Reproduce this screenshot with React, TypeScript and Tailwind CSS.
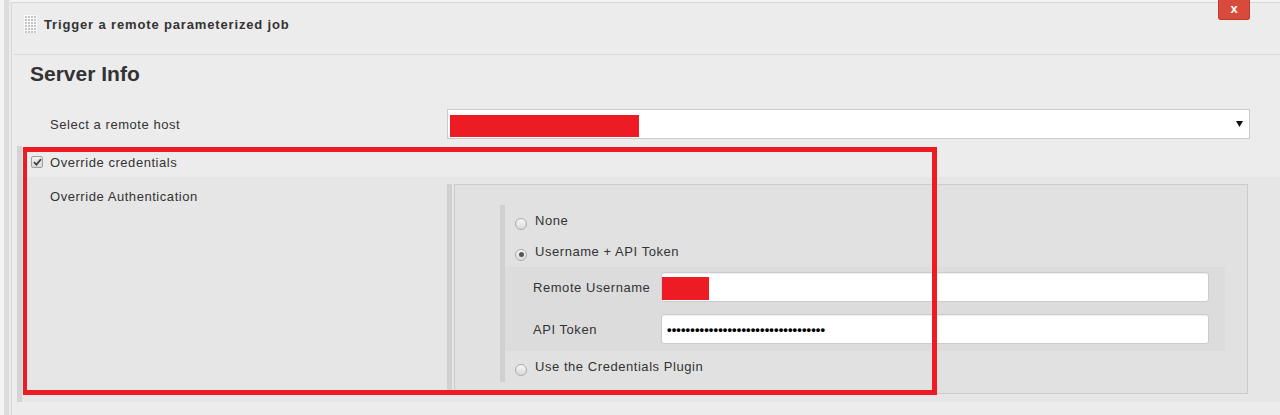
import React from "react";

const font = { fontFamily: '"Liberation Sans", Arial, sans-serif' };

function Grip() {
  const dots: React.ReactNode[] = [];
  for (let r = 0; r < 6; r++) {
    for (let c = 0; c < 4; c++) {
      dots.push(<rect key={`${r}-${c}`} x={1 + c * 3} y={1 + r * 3} width={2} height={2} fill="#c4c4c4" />);
    }
  }
  return (
    <svg width="13" height="18" viewBox="0 0 13 18" className="shrink-0">
      <rect x="0" y="0" width="13" height="18" fill="#fafafa" />
      {dots}
    </svg>
  );
}

function Radio({ checked }: { checked?: boolean }) {
  return (
    <span className="mt-[6px] flex h-[12px] w-[12px] shrink-0 items-center justify-center rounded-full border border-[#ababab] bg-gradient-to-b from-[#f6f6f6] to-[#dadada]">
      {checked && <span className="h-[5px] w-[5px] rounded-full bg-[#555]" />}
    </span>
  );
}

function Checkbox() {
  return (
    <span className="flex h-[12px] w-[12px] shrink-0 items-center justify-center rounded-[2px] border border-[#a0a0a0] bg-gradient-to-b from-[#f2f2f2] to-[#d8d8d8]">
      <svg width="9" height="8" viewBox="0 0 9 8">
        <path d="M1 4.2 L3.4 6.6 L8 1.2" stroke="#444" strokeWidth="1.8" fill="none" />
      </svg>
    </span>
  );
}

export default function App() {
  return (
    <div className="relative flex h-[415px] w-[1280px] overflow-hidden bg-[#f3f3f3] text-[13px] leading-[15px] tracking-[0.55px] text-[#333]" style={font}>
      <div className="w-[4px] shrink-0" />
      <div className="w-[5px] shrink-0 bg-[#dcdcdc]" />
      <div className="w-[2px] shrink-0 bg-[#ececec]" />
      <div className="mt-[2px] flex flex-1 flex-col border-l border-t border-[#d8d8d8] bg-[#ececec]">
        {/* header */}
        <div className="ml-[2px] h-[52px] border-b border-[#d8d8d8] pl-[10px] pt-[12px]">
          <div className="flex h-[18px] items-center gap-[7px]">
            <Grip />
            <span className="font-bold tracking-[0.85px]">Trigger a remote parameterized job</span>
          </div>
        </div>
        {/* Server info */}
        <div className="mt-[7px] pl-[18px] text-[21px] font-bold leading-[24px] tracking-normal">Server Info</div>
        <div className="mt-[23px] flex items-center">
          <div className="w-[435px] shrink-0 pl-[38px] pt-[-1px]">Select a remote host</div>
          <div className="mr-[30px] flex h-[30px] flex-1 items-start border border-[#cacaca] bg-white">
            <div className="ml-[2px] mt-[5px] h-[22px] w-[189px] bg-[#ed1c24]" />
            <div className="flex-1" />
            <svg width="7" height="7" viewBox="0 0 7 7" className="mr-[6px] mt-[11px]">
              <polygon points="0,0 7,0 3.5,6" fill="#111" />
            </svg>
          </div>
        </div>
        {/* override section */}
        <div className="ml-[5px] mt-[7px] flex flex-col border-l-[5px] border-[#d4d4d4]">
          <div className="flex h-[31px] items-center gap-[7px] pl-[9px]">
            <Checkbox />
            <span className="mt-[1px]">Override credentials</span>
          </div>
          <div className="flex items-start bg-[#e6e6e6] pb-[8px] pt-[7px]">
            <div className="mt-[5px] w-[425px] shrink-0 pl-[28px]">Override Authentication</div>
            <div className="mr-[32px] flex flex-1">
              <div className="w-[5px] shrink-0 bg-[#d0d0d0]" />
              <div className="w-[2px] shrink-0" />
              <div className="flex-1 border border-[#cbcbcb] bg-[#e1e1e1] pb-[11px] pl-[45px] pr-[22px] pt-[20px]">
                <div className="flex flex-col border-l-[5px] border-[#d0d0d0]">
                  <div className="flex h-[31px] items-center gap-[8px] pl-[10px]">
                    <Radio />
                    <span>None</span>
                  </div>
                  <div className="flex h-[31px] items-center gap-[8px] pl-[10px]">
                    <Radio checked />
                    <span>Username + API Token</span>
                  </div>
                  <div className="flex flex-col gap-[12px] bg-[#dcdcdc] pb-[7px] pr-[16px] pt-[5px]">
                    <div className="flex items-center">
                      <div className="w-[156px] shrink-0 pl-[28px]">Remote Username</div>
                      <div className="flex h-[30px] flex-1 items-start rounded-[3px] border border-[#cbcbcb] bg-white shadow-[inset_0_1px_1px_rgba(0,0,0,0.07)]">
                        <div className="mt-[4px] h-[23px] w-[47px] bg-[#ed1c24]" />
                      </div>
                    </div>
                    <div className="flex items-center">
                      <div className="w-[156px] shrink-0 pl-[28px]">API Token</div>
                      <div className="flex h-[30px] flex-1 items-center overflow-hidden rounded-[3px] border border-[#cbcbcb] bg-white pl-[5px] shadow-[inset_0_1px_1px_rgba(0,0,0,0.07)]">
                        <span className="text-[13px] font-bold leading-[15px] tracking-[0.1px] text-black">{"•".repeat(34)}</span>
                      </div>
                    </div>
                  </div>
                  <div className="flex h-[31px] items-center gap-[8px] pl-[10px]">
                    <Radio />
                    <span>Use the Credentials Plugin</span>
                  </div>
                </div>
              </div>
            </div>
          </div>
        </div>
      </div>
      {/* close button */}
      <div className="absolute left-[1218px] top-0 flex h-[20px] w-[32px] items-center justify-center rounded-b-[3px] border border-t-0 border-[#c0392b] bg-[#d84a3b] pb-[2px] text-[13px] font-bold tracking-normal text-white">
        x
      </div>
      {/* annotation */}
      <div className="pointer-events-none absolute left-[23px] top-[147px] h-[248px] w-[914px] border-[5px] border-l-4 border-[#ed1c24]" />
    </div>
  );
}
